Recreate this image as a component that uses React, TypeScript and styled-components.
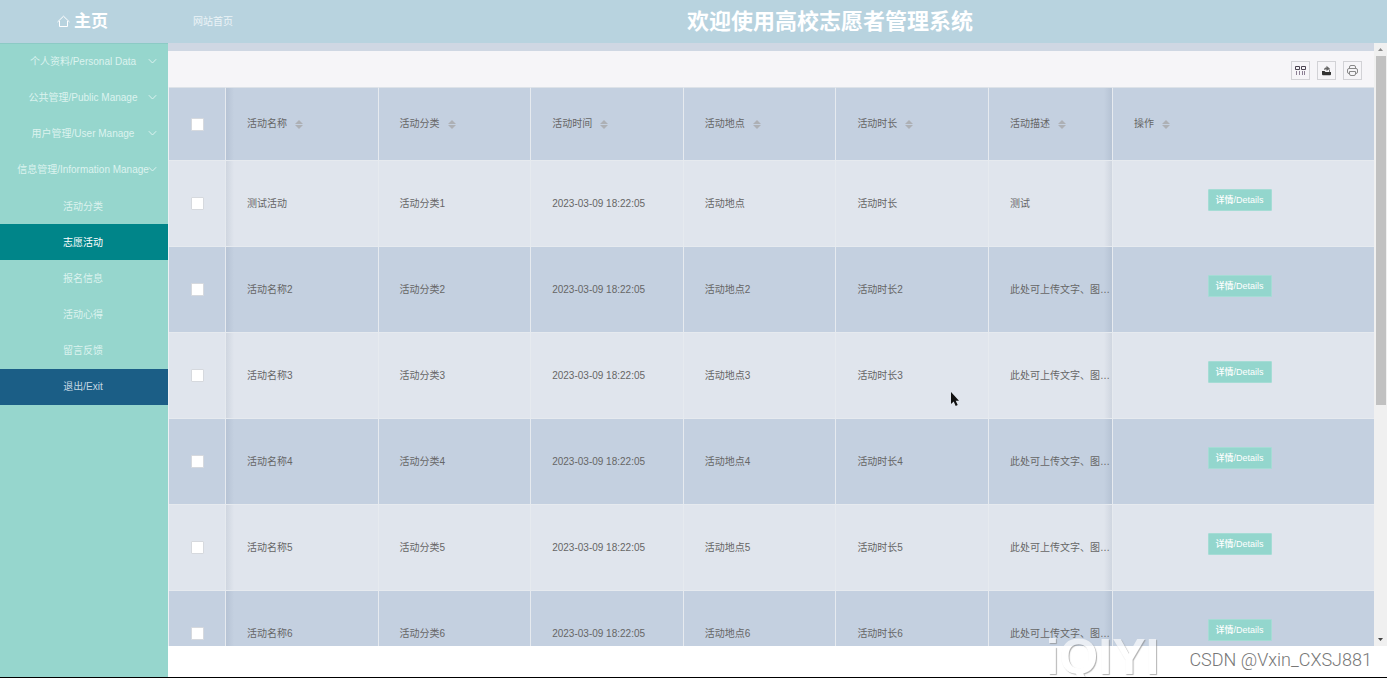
import React from "react";
import styled, { createGlobalStyle, css } from "styled-components";

const Global = createGlobalStyle`
  *, *::before, *::after { box-sizing: border-box; }
  body { margin: 0; font: 10px/16px "Liberation Sans", "Noto Sans CJK SC", sans-serif; color: #666; }
  button, input { font: inherit; margin: 0; }
  ul { list-style: none; margin: 0; padding: 0; }
`;

const Shell = styled.div`
  display: flex;
  flex-direction: column;
  height: 100vh;
  overflow: hidden;
  position: relative;
  background: #fff;
  border-bottom: 1px solid #000;
`;

const Header = styled.header`
  display: flex;
  align-items: center;
  flex: none;
  height: 43px;
  background: #b8d3df;
  color: #fff;
`;

const Brand = styled.a`
  display: flex;
  align-items: center;
  justify-content: center;
  gap: 4px;
  width: 168px;
  padding-right: 3px;
  flex: none;
  color: #fff;
  text-decoration: none;
  font-size: 17px;
  line-height: 24px;
  font-weight: 700;
`;

const HomeLink = styled.a`
  padding: 0 40px 0 25px;
  color: #ecf4f7;
  text-decoration: none;
`;

const Title = styled.h1`
  flex: 1;
  margin: 0;
  text-align: center;
  font-size: 22px;
  line-height: 32px;
  font-weight: 700;
`;

const Body = styled.div`
  display: flex;
  flex: 1;
  min-height: 0;
`;

const Sidebar = styled.nav`
  width: 168px;
  flex: none;
  background: #96d6cd;
  border-top: 1px solid #8ccac5;
`;

const SubMenu = styled.ul`
  && { padding-bottom: 1px; }
`;

const itemTone = {
  plain: css`background: transparent; color: #dcf3ef;`,
  active: css`background: #008589; color: #fff;`,
  exit: css`background: #1b5e86; color: #c5d8e3;`,
};

const MenuItem = styled.a<{ $tone?: keyof typeof itemTone; $sub?: boolean }>`
  display: flex;
  align-items: center;
  justify-content: center;
  position: relative;
  height: 36px;
  padding: ${(p) => (p.$sub ? 2 : 0)}px 2px 0 0;
  white-space: nowrap;
  text-decoration: none;
  ${(p) => itemTone[p.$tone ?? "plain"]}
`;

const Chevron = styled.svg`
  position: absolute;
  right: 11px;
  top: 14px;
`;

const Main = styled.main`
  display: flex;
  flex-direction: column;
  flex: 1;
  min-width: 0;
  padding-bottom: 31px;
`;

const Frame = styled.div`
  display: flex;
  flex: 1;
  min-height: 0;
`;

const Pane = styled.section`
  flex: 1;
  min-width: 0;
  overflow: hidden;
  border-top: 8px solid #cfd7e3;
`;

const Toolbar = styled.div`
  display: flex;
  align-items: center;
  justify-content: flex-end;
  gap: 7px;
  height: 36px;
  padding: 2px 12px 0 0;
  background: #f6f5f8;
`;

const ToolButton = styled.button`
  display: grid;
  place-items: center;
  width: 19px;
  height: 19px;
  padding: 0;
  border: 1px solid #d2d2d6;
  background: transparent;
  color: #444;
`;

const Table = styled.table`
  width: 100%;
  table-layout: fixed;
  border-collapse: separate;
  border-spacing: 0;
  border-left: 1px solid #eef0f4;
`;

const Col = styled.col<{ $w?: number }>`
  width: ${(p) => (p.$w ? `${p.$w}px` : "auto")};
`;

const Row = styled.tr<{ $dark?: boolean }>`
  height: ${(p) => (p.$dark === undefined ? 74 : 86)}px;
  background: ${(p) => (p.$dark === false ? "#e0e5ed" : "#c4d0e0")};
`;

const fade = { left: "to right", right: "to left" };

const cell = css<{ $shade?: keyof typeof fade; $check?: boolean }>`
  padding: ${(p) => (p.$check ? "0" : "0 0 0 21px")};
  text-align: ${(p) => (p.$check ? "center" : "left")};
  font-weight: 400;
  white-space: nowrap;
  overflow: hidden;
  text-overflow: ellipsis;
  border-right: 1px solid #e6eaef;
  border-bottom: 1px solid #e6eaef;
  ${(p) =>
    p.$shade &&
    css`background-image: linear-gradient(${fade[p.$shade]}, rgba(60, 80, 110, 0.1), rgba(60, 80, 110, 0) 8px);`}
  &:last-child { border-right: 0; }
`;

const Th = styled.th`
  ${cell}
  border-top: 1px solid #dde2e8;
`;
const Td = styled.td`
  ${cell}
`;

const ActionCell = styled(Td)`
  padding: 0 8px 8px 0;
  text-align: center;
`;

const Check = styled.input`
  appearance: none;
  display: inline-block;
  vertical-align: middle;
  width: 13px;
  height: 13px;
  border: 1px solid #d6d9de;
  border-radius: 1px;
  background: #fff;
`;

const SortButton = styled.button`
  display: inline-flex;
  align-items: center;
  gap: 8px;
  padding: 0;
  border: 0;
  background: none;
  color: inherit;
`;

const Details = styled.button`
  width: 64px;
  height: 22px;
  padding: 0;
  border: 1px solid #a5dcd5;
  border-radius: 1px;
  background: #93d6cd;
  color: #fff;
  font-size: 9px;
  line-height: 20px;
  font-weight: 500;
  vertical-align: middle;
`;

const Scrollbar = styled.div`
  display: flex;
  flex-direction: column;
  align-items: center;
  flex: none;
  width: 13px;
  background: #f0f0f0;
`;

const Arrow = styled.svg`
  flex: none;
  width: 13px;
  height: 13px;
`;

const Track = styled.div`
  display: grid;
  grid-template-rows: 23fr 15fr;
  flex: 1;
  width: 10px;
`;

const Thumb = styled.div`
  background: #c1c1c1;
`;

const Watermarks = styled.div`
  position: absolute;
  right: 15px;
  bottom: 0;
  display: flex;
  align-items: flex-end;
  gap: 30px;
  pointer-events: none;
`;

const Logo = styled.span`
  font: 700 50px/40px "Liberation Sans", sans-serif;
  color: #fff;
  text-shadow: 1px 1px 1px #888;
  opacity: 0.65;
`;

const Credit = styled.span`
  font: 300 18px/24px Roboto, "Liberation Sans", sans-serif;
  color: #777;
  padding-bottom: 5px;
`;

const Pointer = styled.svg`
  position: absolute;
  left: 950px;
  top: 391px;
  pointer-events: none;
`;

const groups = ["个人资料/Personal Data", "公共管理/Public Manage", "用户管理/User Manage", "信息管理/Information Manage"];
const pages = ["活动分类", "志愿活动", "报名信息", "活动心得", "留言反馈"];
const columns = ["活动名称", "活动分类", "活动时间", "活动地点", "活动时长", "活动描述", "操作"];
const time = "2023-03-09 18:22:05";
const rows = [
  ["测试活动", "活动分类1", time, "活动地点", "活动时长", "测试"],
  ...[2, 3, 4, 5, 6].map((n) => [
    `活动名称${n}`,
    `活动分类${n}`,
    time,
    `活动地点${n}`,
    `活动时长${n}`,
    "此处可上传文字、图片、视频等",
  ]),
];

const shadeOf = (i: number) => (i === 0 ? "left" : i === 5 ? "right" : undefined);

export default function App() {
  return (
    <Shell>
      <Global />
      <Header>
        <Brand href="#">
          <svg width="13" height="13" viewBox="0 0 13 13" fill="none" stroke="#fff" strokeWidth="1">
            <path d="M.5 7 6.500 1.200 12.500 7M2.500 6v5.500h8V6" />
          </svg>
          主页
        </Brand>
        <HomeLink href="#">网站首页</HomeLink>
        <Title>欢迎使用高校志愿者管理系统</Title>
      </Header>
      <Body>
        <Sidebar>
          <ul>
            {groups.map((g, n) => (
              <li key={g}>
                <MenuItem href="#">
                  {g}
                  <Chevron width="9" height="7" viewBox="0 0 9 7" fill="none" stroke="#dcf3ef">
                    <path d="M.8 1.2 4.5 5l3.7-3.8" />
                  </Chevron>
                </MenuItem>
                {n === groups.length - 1 && (
                  <SubMenu>
                    {pages.map((p, i) => (
                      <li key={p}>
                        <MenuItem href="#" $sub $tone={i === 1 ? "active" : "plain"}>{p}</MenuItem>
                      </li>
                    ))}
                  </SubMenu>
                )}
              </li>
            ))}
            <li>
              <MenuItem href="#" $tone="exit">退出/Exit</MenuItem>
            </li>
          </ul>
        </Sidebar>
        <Main>
          <Frame>
            <Pane>
              <Toolbar>
                <ToolButton aria-label="筛选列">
                  <svg width="11" height="11" viewBox="0 0 11 11" fill="none" stroke="#4a4350">
                    <path d="M.5 1.500h4v3h-4zM6.500 1.500h4v3h-4z" />
                    <path d="M1.500 6v4M4.500 6v4M7.500 6v4M9.500 6v4" stroke="#8c7f94" />
                  </svg>
                </ToolButton>
                <ToolButton aria-label="导出">
                  <svg width="11" height="11" viewBox="0 0 11 11">
                    <path d="M1 6h2.500l1 1H10v2.500l-.7.700H1.700L1 9.500z" fill="#333" />
                    <path d="M3 5c0-2 1.200-2.500 2.500-2.500V.8L9 3.700 5.500 6V4.500C4.500 4.500 3.700 4.500 3 5z" fill="#666" />
                    <path d="M8.500 4.500V7" stroke="#777" />
                  </svg>
                </ToolButton>
                <ToolButton aria-label="打印">
                  <svg width="11" height="11" viewBox="0 0 11 11" fill="none" stroke="#888">
                    <path d="M2.500 3.500V2q0-1.500 1.500-1.500h3q1.500 0 1.500 1.500v1.500M2.500 8.500H2Q.5 8.500.5 7V5Q.5 3.500 2 3.500h7q1.500 0 1.500 1.500v2q0 1.500-1.500 1.500h-.5M2.500 6.500h6V9q0 1.500-1.500 1.500H4Q2.500 10.500 2.500 9z" />
                  </svg>
                </ToolButton>
              </Toolbar>
              <Table>
                <colgroup>
                  <Col $w={57} />
                  <Col /><Col /><Col /><Col /><Col />
                  <Col $w={124} />
                  <Col $w={261} />
                </colgroup>
                <thead>
                  <Row>
                    <Th $check><Check type="checkbox" aria-label="全选" /></Th>
                    {columns.map((c, i) => (
                      <Th key={c} $shade={shadeOf(i)}>
                        <SortButton>
                          {c}
                          <svg width="8" height="9" viewBox="0 0 8 9" fill="#adb0b5">
                            <path d="M0 4 4 0l4 4zM0 5h8L4 9z" />
                          </svg>
                        </SortButton>
                      </Th>
                    ))}
                  </Row>
                </thead>
                <tbody>
                  {rows.map((r, n) => (
                    <Row key={n} $dark={n % 2 === 1}>
                      <Td $check><Check type="checkbox" aria-label={r[0]} /></Td>
                      {r.map((v, i) => (
                        <Td key={i} $shade={shadeOf(i)}>{v}</Td>
                      ))}
                      <ActionCell><Details>详情/Details</Details></ActionCell>
                    </Row>
                  ))}
                </tbody>
              </Table>
            </Pane>
            <Scrollbar>
              <Arrow viewBox="0 0 13 13"><path d="M4 8h5L6.500 5z" fill="#8a8a8a" /></Arrow>
              <Track><Thumb /></Track>
              <Arrow viewBox="0 0 13 13"><path d="M4 5h5L6.500 8z" fill="#444" /></Arrow>
            </Scrollbar>
          </Frame>
        </Main>
      </Body>
      <Watermarks>
        <Logo>iQIYI</Logo>
        <Credit>CSDN @Vxin_CXSJ881</Credit>
      </Watermarks>
      <Pointer width="10" height="16" viewBox="0 0 10 16">
        <path d="M1 1v12l2.700-2.400L5.700 15l2-.9-2-4.300H9z" fill="#111" />
      </Pointer>
    </Shell>
  );
}
